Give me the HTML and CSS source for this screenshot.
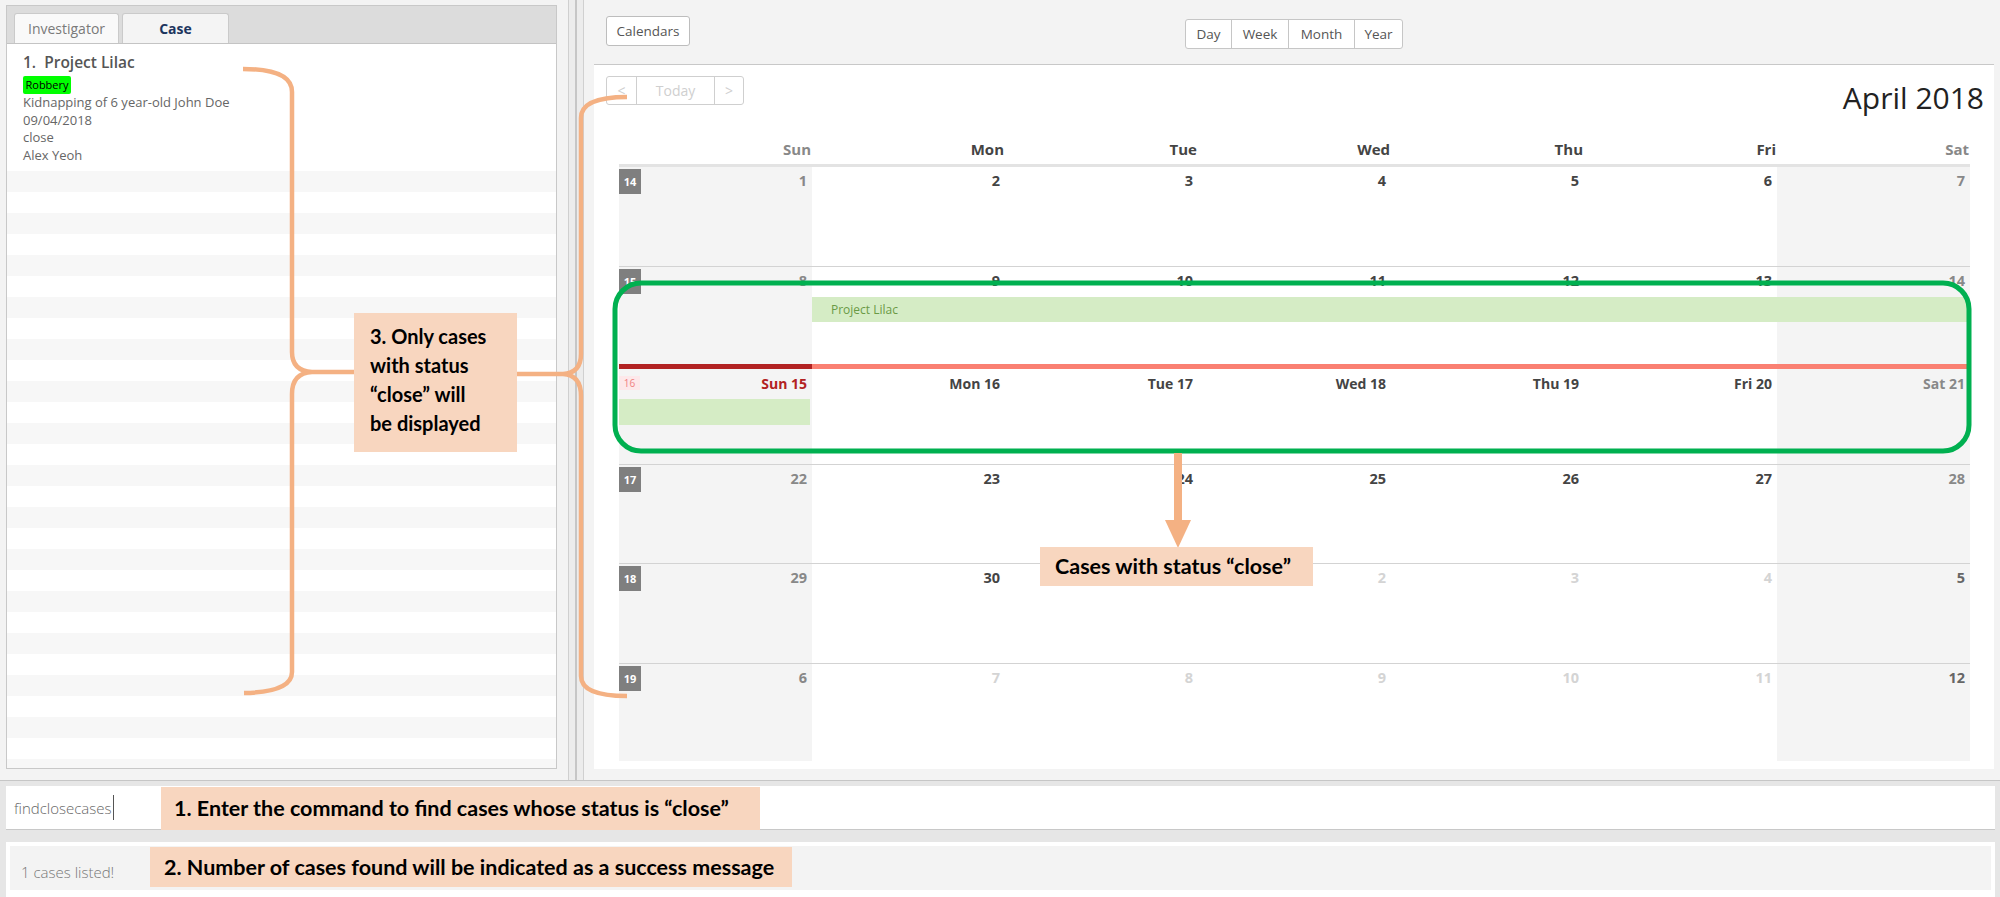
FILE: index.html
```html
<!DOCTYPE html>
<html>
<head>
<meta charset="utf-8">
<title>Case Calendar</title>
<link rel="stylesheet" href="styles.css">
</head>
<body>
<div class="app">
  <div class="main">
    <div class="leftpane">
      <div class="panel">
        <div class="tabs">
          <div class="tab">Investigator</div>
          <div class="tab active">Case</div>
        </div>
        <div class="list">
          <div class="card">
            <div class="card-title">1.&nbsp;&nbsp;Project Lilac</div>
            <div class="tagwrap"><span class="tag">Robbery</span></div>
            <div class="line">Kidnapping of 6 year-old John Doe</div>
            <div class="line">09/04/2018</div>
            <div class="line">close</div>
            <div class="line">Alex Yeoh</div>
          </div>
          <div class="row"></div><div class="row"></div><div class="row"></div><div class="row"></div>
          <div class="row"></div><div class="row"></div><div class="row"></div><div class="row"></div>
          <div class="row"></div><div class="row"></div><div class="row"></div><div class="row"></div>
          <div class="row"></div><div class="row"></div><div class="row"></div><div class="row"></div>
          <div class="row"></div><div class="row"></div><div class="row"></div><div class="row"></div>
          <div class="row"></div><div class="row"></div><div class="row"></div><div class="row"></div>
          <div class="row"></div><div class="row"></div><div class="row"></div><div class="row"></div>
          <div class="row"></div><div class="row"></div>
        </div>
      </div>
    </div>
    <div class="divider"></div>
    <div class="rightpane">
      <div class="toolbar">
        <div class="btn-cal">Calendars</div>
        <div class="btngroup">
          <span class="b-day">Day</span><span class="b-week">Week</span><span class="b-month">Month</span><span class="b-year">Year</span>
        </div>
      </div>
      <div class="cal">
        <div class="calhead">
          <div class="nav"><span class="nv-prev">&lt;</span><span class="nv-today">Today</span><span class="nv-next">&gt;</span></div>
          <div class="title">April 2018</div>
        </div>
        <div class="dow">
          <div class="we">Sun</div><div>Mon</div><div>Tue</div><div>Wed</div><div>Thu</div><div>Fri</div><div class="we">Sat</div>
        </div>
        <div class="weeks">
          <div class="week h1">
            <div class="day we"><span class="wn">14</span><span class="num">1</span></div>
            <div class="day"><span class="num">2</span></div>
            <div class="day"><span class="num">3</span></div>
            <div class="day"><span class="num">4</span></div>
            <div class="day"><span class="num">5</span></div>
            <div class="day"><span class="num">6</span></div>
            <div class="day we"><span class="num">7</span></div>
          </div>
          <div class="week week2">
            <div class="day we c1"><span class="wn">15</span><span class="num">8</span></div>
            <div class="day c2"><span class="num">9</span></div>
            <div class="day c3"><span class="num">10</span></div>
            <div class="day c4"><span class="num">11</span></div>
            <div class="day c5"><span class="num">12</span></div>
            <div class="day c6"><span class="num">13</span></div>
            <div class="day we c7"><span class="num">14</span></div>
            <div class="event">Project Lilac</div>
            <div class="redline-sun"></div>
            <div class="redline"></div>
            <div class="wh sun c1"><span class="wkpink">16</span><span>Sun 15</span></div>
            <div class="wh c2">Mon 16</div>
            <div class="wh c3">Tue 17</div>
            <div class="wh c4">Wed 18</div>
            <div class="wh c5">Thu 19</div>
            <div class="wh c6">Fri 20</div>
            <div class="wh sat c7">Sat 21</div>
            <div class="sunbar"></div>
          </div>
          <div class="week h3">
            <div class="day we"><span class="wn">17</span><span class="num">22</span></div>
            <div class="day"><span class="num">23</span></div>
            <div class="day"><span class="num">24</span></div>
            <div class="day"><span class="num">25</span></div>
            <div class="day"><span class="num">26</span></div>
            <div class="day"><span class="num">27</span></div>
            <div class="day we"><span class="num">28</span></div>
          </div>
          <div class="week h4">
            <div class="day we"><span class="wn">18</span><span class="num">29</span></div>
            <div class="day"><span class="num">30</span></div>
            <div class="day"><span class="num off hidden-under">1</span></div>
            <div class="day"><span class="num off">2</span></div>
            <div class="day"><span class="num off">3</span></div>
            <div class="day"><span class="num off">4</span></div>
            <div class="day we"><span class="num offwe">5</span></div>
          </div>
          <div class="week h5">
            <div class="day we"><span class="wn">19</span><span class="num">6</span></div>
            <div class="day"><span class="num off">7</span></div>
            <div class="day"><span class="num off">8</span></div>
            <div class="day"><span class="num off">9</span></div>
            <div class="day"><span class="num off">10</span></div>
            <div class="day"><span class="num off">11</span></div>
            <div class="day we"><span class="num offwe">12</span></div>
          </div>
        </div>
      </div>
    </div>
  </div>
  <div class="bottom">
    <div class="cmd"><span class="cmdtext">findclosecases</span><span class="caret"></span></div>
    <div class="result"><div class="result-inner">1 cases listed!</div></div>
  </div>

  <svg class="overlay" width="2000" height="897" viewBox="0 0 2000 897">
    <rect x="615" y="283" width="1354" height="168" rx="26" ry="26" fill="none" stroke="#00b050" stroke-width="5"/>
    <path d="M243,69 Q292,69 292,92 L292,352 Q292,371 312,372 L358,372 M312,372 Q292,373 292,394 L292,672 Q292,692 244,693" fill="none" stroke="#f4b183" stroke-width="4.5"/>
    <path d="M627,97 Q581,97 581,118 L581,354 Q581,373 563,374 L517,374 M563,374 Q581,375 581,396 L581,676 Q581,696 627,696" fill="none" stroke="#f4b183" stroke-width="4.5"/>
    <rect x="1174" y="453" width="8" height="68" fill="#f4b183"/>
    <polygon points="1165,520 1191,520 1178,548" fill="#f4b183"/>
  </svg>

  <div class="note n1">1. Enter the command to find cases whose status is “close”</div>
  <div class="note n2">2. Number of cases found will be indicated as a success message</div>
  <div class="note n3">3. Only cases<br>with status<br>“close” will<br>be displayed</div>
  <div class="note n4">Cases with status “close”</div>
</div>
</body>
</html>
```

FILE: styles.css
```css
* { box-sizing: border-box; }
html, body { margin: 0; padding: 0; }
body {
  width: 2000px;
  height: 897px;
  overflow: hidden;
  background: #f3f3f3;
  font-family: "Open Sans", "Noto Sans", sans-serif;
}
.app { position: relative; width: 2000px; height: 897px; }

.main {
  display: flex;
  height: 781px;
  border-bottom: 1px solid #c6c6c6;
}

/* left pane */
.leftpane { width: 566px; padding: 5px 0 0 6px; }
.panel {
  width: 551px;
  height: 764px;
  border: 1px solid #c8c8c8;
  background: #fff;
  display: flex;
  flex-direction: column;
  overflow: hidden;
}
.tabs {
  height: 38px;
  flex: none;
  background: #dcdcdc;
  border-bottom: 1px solid #c4c4c4;
  display: flex;
  gap: 3px;
  padding: 7px 0 0 7px;
}
.tab {
  width: 105px;
  height: 30px;
  background: #f9f9f9;
  border: 1px solid #cacaca;
  border-bottom: none;
  border-radius: 3px 3px 0 0;
  text-align: center;
  line-height: 29px;
  font-size: 14px;
  color: #7a7a7a;
}
.tab.active {
  width: 107px;
  background: #f4f4f4;
  color: #1c355e;
  font-weight: 700;
}
.list { flex: 1; overflow: hidden; }
.card { height: 127px; padding: 8px 0 0 16px; }
.card-title { font-size: 15.5px; font-weight: 600; color: #555; line-height: 20px; }
.tagwrap { height: 22px; padding-top: 4px; }
.tag {
  display: block;
  width: 48px;
  height: 18px;
  line-height: 18px;
  background: #00ff00;
  color: #000;
  font-size: 11px;
  text-align: center;
  border-radius: 2px;
}
.line { font-size: 13px; color: #666; line-height: 17.6px; }
.row { height: 21px; }
.row:nth-child(even) { background: #f7f7f7; }

/* divider */
.divider {
  width: 19px;
  flex: none;
  background: linear-gradient(to right,
    transparent 2px, #cfcfcf 2px, #cfcfcf 3px,
    #ececec 3px, #ececec 9px,
    #c6c6c6 9px, #c6c6c6 11px,
    #ececec 11px, #ececec 17px,
    #d0d0d0 17px, #d0d0d0 18px, transparent 18px);
}

/* right pane */
.rightpane { flex: 1; display: flex; flex-direction: column; }
.toolbar {
  height: 64px;
  margin: 0 6px 0 9px;
  padding: 0 12px;
  display: grid;
  grid-template-columns: 1fr auto 1fr;
  align-items: start;
}
.btn-cal {
  justify-self: start;
  margin-top: 16px;
  width: 84px;
  height: 30px;
  background: #fff;
  border: 1px solid #bdbdbd;
  border-radius: 3px;
  font-size: 13.5px;
  color: #555;
  text-align: center;
  line-height: 28px;
}
.btngroup {
  margin-top: 19px;
  height: 30px;
  display: flex;
  background: #fff;
  border: 1px solid #c6c6c6;
  border-radius: 3px;
}
.btngroup span {
  font-size: 13.5px;
  color: #555;
  text-align: center;
  line-height: 28px;
  border-left: 1px solid #c6c6c6;
}
.btngroup span:first-child { border-left: none; }
.b-day { width: 45px; }
.b-week { width: 57px; }
.b-month { width: 66px; }
.b-year { width: 48px; }

.cal {
  height: 705px;
  margin: 0 6px 0 9px;
  background: #fff;
  border-top: 1px solid #c8c8c8;
}
.calhead {
  height: 65px;
  display: flex;
  justify-content: space-between;
  align-items: flex-start;
  padding: 0 10px 0 12px;
}
.nav {
  margin-top: 11px;
  height: 29px;
  display: flex;
  border: 1px solid #cfcfcf;
  border-radius: 3px;
}
.nav span {
  color: #cfcfcf;
  font-size: 14px;
  line-height: 27px;
  text-align: center;
  border-left: 1px solid #cfcfcf;
}
.nav span:first-child { border-left: none; }
.nv-prev { width: 29px; }
.nv-today { width: 78px; }
.nv-next { width: 29px; }
.title {
  margin-top: 13px;
  line-height: 40px;
  font-size: 30px;
  color: #222;
}

.dow {
  display: grid;
  grid-template-columns: repeat(7, 1fr);
  margin: 0 24px 0 25px;
  height: 37px;
  border-bottom: 3px solid #e3e3e3;
}
.dow div {
  text-align: right;
  padding: 4px 1px 0 0;
  line-height: 30px;
  font-weight: 700;
  font-size: 15px;
  color: #444;
}
.dow .we { color: #888; }

.weeks { margin: 0 24px 0 25px; }
.week {
  display: grid;
  grid-template-columns: repeat(7, 1fr);
  border-top: 1px solid #d3d3d3;
}
.week.h1 { height: 99px; border-top: none; }
.week.h3 { height: 99px; }
.week.h4 { height: 100px; }
.week.h5 { height: 98px; }
.day {
  display: flex;
  justify-content: space-between;
  align-items: flex-start;
  padding-right: 5px;
}
.day.we { background: #f4f4f4; }
.wn {
  margin-top: 2px;
  width: 22px;
  height: 25px;
  background: #7f7f7f;
  color: #fff;
  font-size: 11px;
  font-weight: 700;
  line-height: 25px;
  text-align: center;
}
.num {
  margin-left: auto;
  padding-top: 4px;
  line-height: 20px;
  font-size: 14.5px;
  font-weight: 700;
  color: #444;
}
.day.we .num { color: #888; }
.num.off { color: #d4d4d4; }
.num.hidden-under { padding-right: 4px; }
.day.we .num.offwe { color: #666; }

.week2 {
  height: 198px;
  grid-template-rows: 30px 25px 42px 5px 28px 2px 26px 1fr;
}
.week2 .day { grid-row: 1 / -1; }
.c1 { grid-column: 1; }
.c2 { grid-column: 2; }
.c3 { grid-column: 3; }
.c4 { grid-column: 4; }
.c5 { grid-column: 5; }
.c6 { grid-column: 6; }
.c7 { grid-column: 7; }
.event {
  grid-row: 2;
  grid-column: 2 / 8;
  margin-right: 3px;
  background: #d5ecc5;
  color: #6a9a45;
  font-size: 12px;
  line-height: 25px;
  padding-left: 19px;
}
.redline-sun { grid-row: 4; grid-column: 1; background: #b22222; }
.redline { grid-row: 4; grid-column: 2 / 8; margin-right: 3px; background: #fa8072; }
.wh {
  grid-row: 5;
  display: flex;
  justify-content: flex-end;
  align-items: center;
  padding-right: 5px;
  font-weight: 700;
  font-size: 14px;
  color: #444;
}
.wh.sun { justify-content: space-between; color: #b22222; }
.wh.sat { color: #888; }
.wkpink {
  width: 21px;
  height: 14px;
  background: #fde8ea;
  color: #f08080;
  font-size: 10px;
  font-weight: 400;
  line-height: 14px;
  text-align: center;
}
.sunbar { grid-row: 7; grid-column: 1; margin-right: 2px; background: #d5ecc5; }

/* bottom */
.bottom {
  height: 116px;
  background: #e6e6e6;
  padding: 5px 5px 0 6px;
}
.cmd {
  height: 44px;
  background: #fff;
  border-bottom: 1px solid #c8c8c8;
  display: flex;
  align-items: center;
  padding-left: 8px;
}
.cmdtext { font-size: 15px; font-weight: 300; color: #666; }
.caret { width: 1px; height: 25px; background: #555; margin-left: 1px; }
.result {
  margin-top: 12px;
  height: 55px;
  background: #fff;
  padding: 4px 4px 7px 4px;
}
.result-inner {
  height: 44px;
  background: #f3f3f3;
  padding: 4px 0 0 11px;
  line-height: 44px;
  font-size: 15px;
  font-weight: 300;
  color: #777;
}

/* annotations */
.overlay { position: absolute; left: 0; top: 0; pointer-events: none; }
.note {
  position: absolute;
  background: #f8d6bf;
  color: #000;
  font-family: Lato, "Open Sans", sans-serif;
  font-weight: 700;
  font-size: 21.5px;
  white-space: nowrap;
}
.n1 { left: 161px; top: 787px; width: 599px; height: 43px; padding-left: 13px; line-height: 43px; }
.n2 { left: 150px; top: 847px; width: 642px; height: 40px; padding-left: 14px; line-height: 40px; }
.n3 { left: 354px; top: 313px; width: 163px; height: 139px; padding: 9px 0 0 16px; line-height: 29px; font-size: 20px; }
.n4 { left: 1040px; top: 547px; width: 273px; height: 39px; padding-left: 15px; line-height: 39px; }
```
